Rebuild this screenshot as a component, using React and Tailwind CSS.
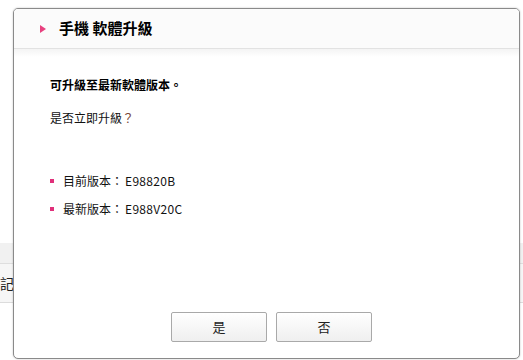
import React from "react";

const font = { fontFamily: '"Noto Sans CJK TC", "Noto Sans", sans-serif' };

const BgRows = () => (
  <div className="w-[523px] h-[360px] bg-white flex flex-col overflow-hidden">
    <div className="h-[243px]" />
    <div className="h-[21px] bg-[#f1f1f1] border-b border-[#dedede]" />
    <div className="h-[39px] bg-[#f6f6f6] border-b border-[#dcdcdc] flex items-center text-[14px] text-[#222]">
      記憶體
    </div>
    <div className="flex-1 bg-white" />
  </div>
);

const Bullet = ({ label, value }) => (
  <div className="flex items-center h-[16px] text-[12px] text-[#111]">
    <span className="w-[4px] h-[4px] bg-[#e0307a] mr-[9px]" />
    <span>{label}</span>
    <span className="ml-[2px] tracking-[0.3px]">{value}</span>
  </div>
);

export default function App() {
  return (
    <div className="relative w-[523px] h-[360px] overflow-hidden" style={font}>
      <BgRows />
      <div className="absolute left-[13px] top-[8px] w-[507px] h-[351px] bg-white border border-[#8a8a8a] rounded-[5px] shadow-[0_0_2px_rgba(0,0,0,0.25)] flex flex-col overflow-hidden">
        <div className="h-[40px] bg-[#fbfbfb] border-b border-[#e2e2e2] flex items-center pl-[26px] shrink-0">
          <span className="w-0 h-0 border-y-[4px] border-y-transparent border-l-[6px] border-l-[#e8417f]" />
          <span className="ml-[13px] text-[15px] font-bold text-black">手機 軟體升級</span>
        </div>
        <div className="h-[8px] bg-gradient-to-b from-[#f4f4f4] to-white shrink-0" />
        <div className="flex flex-col pl-[36px] pt-[20px] flex-1">
          <div className="h-[16px] text-[12px] font-bold text-black leading-[16px]">可升級至最新軟體版本。</div>
          <div className="h-[16px] mt-[17px] text-[12px] text-[#111] leading-[16px]">
            是否立即升級<span className="text-[#7a4a3a]">？</span>
          </div>
          <div className="mt-[47px] flex flex-col gap-[12px]">
            <Bullet label="目前版本：" value="E98820B" />
            <Bullet label="最新版本：" value="E988V20C" />
          </div>
        </div>
        <div className="flex pl-[157px] gap-[9px] pb-[16px] shrink-0">
          <button className="w-[96px] h-[30px] border border-[#a9a9a9] rounded-[2px] bg-gradient-to-b from-white to-[#efefef] text-[13px] text-[#222]">是</button>
          <button className="w-[96px] h-[30px] border border-[#a9a9a9] rounded-[2px] bg-gradient-to-b from-white to-[#efefef] text-[13px] text-[#222]">否</button>
        </div>
      </div>
    </div>
  );
}
